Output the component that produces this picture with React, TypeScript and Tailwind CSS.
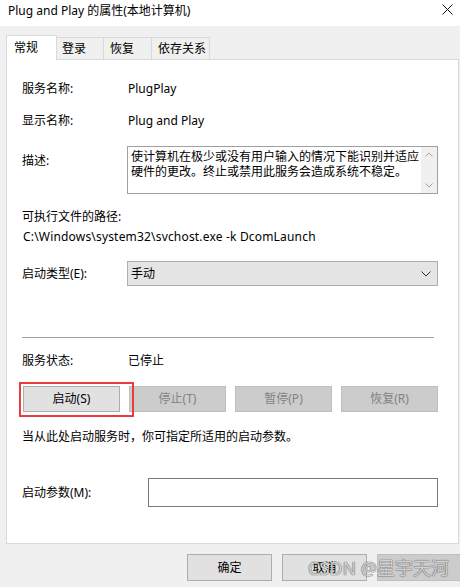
import { useState } from "react";

function Tab({ label, active, w, pl }: { label: string; active?: boolean; w: string; pl: string }) {
  if (active) {
    return (
      <div className={`${w} ${pl} relative z-10 -mb-px h-[25px] border border-b-0 border-[#d9d9d9] bg-white pt-[4px] leading-[16px]`}>
        {label}
      </div>
    );
  }
  return (
    <div className={`${w} ${pl} h-[22px] border-t border-r border-[#d9d9d9] bg-[#f0f0f0] pt-[3px] leading-[16px]`}>
      {label}
    </div>
  );
}

function SvcButton({ children, disabled }: { children: string; disabled?: boolean }) {
  return (
    <div
      className={
        disabled
          ? "flex h-[26px] w-[97px] items-center justify-center border border-[#bfbfbf] bg-[#cccccc] text-[#838383]"
          : "flex h-[26px] w-[97px] items-center justify-center border border-[#adadad] bg-[#e1e1e1]"
      }
    >
      {children}
    </div>
  );
}

export default function App() {
  const [params, setParams] = useState("");

  return (
    <div className="relative h-[587px] w-[460px] overflow-hidden bg-[#f0f0f0] font-['Noto_Sans','Noto_Sans_CJK_SC',sans-serif] text-[12px] leading-[16px] text-black">
      {/* title bar */}
      <div className="flex h-[26px] items-start justify-between bg-white pl-[8px] pr-[7px] pt-[3px]">
        <span>Plug and Play 的属性(本地计算机)</span>
        <svg width="11" height="11" viewBox="0 0 11 11" className="mt-[1px]">
          <path d="M0.5 0.5 L10.5 10.5 M10.5 0.5 L0.5 10.5" stroke="#111" strokeWidth="1" />
        </svg>
      </div>

      {/* tabs */}
      <div className="flex h-[33px] items-end pl-[6px]">
        <Tab label="常规" active w="w-[51px]" pl="pl-[7px]" />
        <Tab label="登录" w="w-[47px]" pl="pl-[5px]" />
        <Tab label="恢复" w="w-[48px]" pl="pl-[6px]" />
        <Tab label="依存关系" w="w-[58px]" pl="pl-[6px]" />
      </div>

      {/* panel */}
      <div className="ml-[6px] h-[485px] w-[453px] border border-[#d9d9d9] bg-white pl-[15px]">
        <div className="mt-[21px] flex">
          <div className="w-[106px]">服务名称:</div>
          <div>PlugPlay</div>
        </div>
        <div className="mt-[16px] flex">
          <div className="w-[106px]">显示名称:</div>
          <div>Plug and Play</div>
        </div>

        <div className="mt-[17px] flex items-start">
          <div className="w-[105px] pt-[7px]">描述:</div>
          <div className="flex h-[48px] w-[311px] border border-[#a0a0a0]">
            <div className="flex-1 pl-[3px] pt-[2px] leading-[15px]">
              使计算机在极少或没有用户输入的情况下能识别并适应
              <br />
              硬件的更改。终止或禁用此服务会造成系统不稳定。
            </div>
            <div className="flex w-[16px] flex-col items-center justify-between bg-[#f0f0f0] py-[5px]">
              <svg width="8" height="5" viewBox="0 0 8 5">
                <path d="M0.5 4.5 L4 1 L7.5 4.5" fill="none" stroke="#a3a3a3" strokeWidth="1" />
              </svg>
              <svg width="8" height="5" viewBox="0 0 8 5">
                <path d="M0.5 0.5 L4 4 L7.5 0.5" fill="none" stroke="#a3a3a3" strokeWidth="1" />
              </svg>
            </div>
          </div>
        </div>

        <div className="mt-[15px]">可执行文件的路径:</div>
        <div className="mt-[4px] pl-[1px] tracking-[0.18px]">C:\Windows\system32\svchost.exe -k DcomLaunch</div>

        <div className="mt-[16px] flex items-center">
          <div className="w-[105px]">启动类型(E):</div>
          <div className="flex h-[25px] w-[311px] items-center justify-between border border-[#adadad] bg-[#e5e5e5] pl-[3px] pr-[6px]">
            <span>手动</span>
            <svg width="10" height="6" viewBox="0 0 10 6">
              <path d="M0.5 0.5 L5 5 L9.5 0.5" fill="none" stroke="#333" strokeWidth="1" />
            </svg>
          </div>
        </div>

        <div className="mt-[51px] h-px w-[412px] bg-[#a0a0a0]" />

        <div className="mt-[15px] flex">
          <div className="w-[106px]">服务状态:</div>
          <div>已停止</div>
        </div>

        <div className="relative mt-[17px] flex gap-[9px] pl-px">
          <SvcButton>启动(S)</SvcButton>
          <SvcButton disabled>停止(T)</SvcButton>
          <SvcButton disabled>暂停(P)</SvcButton>
          <SvcButton disabled>恢复(R)</SvcButton>
          <div className="absolute left-[-3px] top-[-4px] h-[35px] w-[115px] border-2 border-[#ec3b3b]" />
        </div>

        <div className="mt-[17px]">当从此处启动服务时，你可指定所适用的启动参数。</div>

        <div className="mt-[33px] flex items-center">
          <div className="w-[126px]">启动参数(M):</div>
          <input
            value={params}
            onChange={(e) => setParams(e.target.value)}
            className="h-[29px] w-[290px] border border-[#7a7a7a] bg-white px-[3px] outline-none"
          />
        </div>
      </div>

      {/* dialog buttons */}
      <div className="ml-[187px] mt-[10px] flex gap-[10px]">
        <div className="flex h-[27px] w-[85px] shrink-0 items-center justify-center border border-[#adadad] bg-[#e1e1e1]">确定</div>
        <div className="flex h-[27px] w-[85px] shrink-0 items-center justify-center border border-[#adadad] bg-[#e1e1e1]">取消</div>
        <div className="h-[27px] w-[85px] shrink-0 border border-[#bfbfbf] bg-[#cccccc]" />
      </div>

      {/* watermark */}
      <div className="absolute left-[308px] top-[557px] text-[18px] leading-[22px] text-[rgba(255,255,255,0.8)] [text-shadow:0_0_1px_rgba(0,0,0,0.7),0_0_1px_rgba(0,0,0,0.5)]">
        CSDN @星宇天河
      </div>
    </div>
  );
}
